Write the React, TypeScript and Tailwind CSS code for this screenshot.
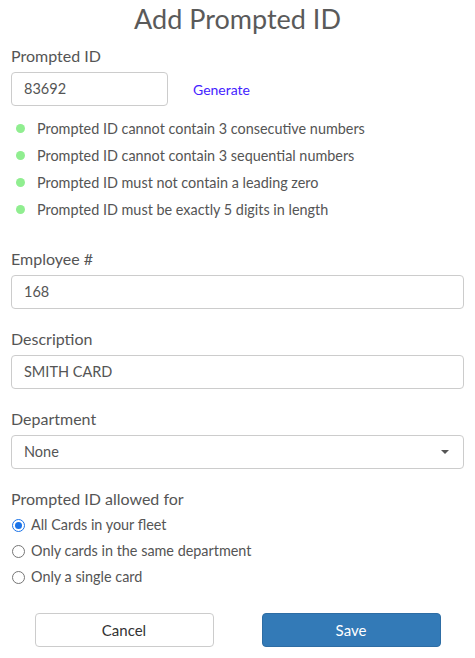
import React from "react";

const Label = ({ children, className = "" }: { children: React.ReactNode; className?: string }) => (
  <div className={`text-[16px] leading-[20px] text-[#555] ${className}`}>{children}</div>
);

const Field = ({ value, className = "" }: { value: string; className?: string }) => (
  <div className={`h-[34px] border border-[#ccc] rounded-[4px] bg-white flex items-center pl-[12px] text-[14.5px] text-[#555] ${className}`}>
    {value}
  </div>
);

const Bullet = ({ text }: { text: string }) => (
  <div className="flex items-center h-[27px]">
    <span className="w-[9px] h-[9px] rounded-full bg-[#90ee90] ml-[5px] mr-[12px] shrink-0" />
    <span className="text-[14.4px] text-[#555]">{text}</span>
  </div>
);

const Radio = ({ label, checked = false }: { label: string; checked?: boolean }) => (
  <div className="flex items-center h-[26px]">
    <span
      className={`w-[13px] h-[13px] rounded-full border ml-[12px] mr-[6px] flex items-center justify-center shrink-0 ${
        checked ? "border-[#1a73e8]" : "border-[#767676]"
      }`}
    >
      {checked && <span className="w-[7px] h-[7px] rounded-full bg-[#1a73e8]" />}
    </span>
    <span className="text-[14.4px] text-[#555]">{label}</span>
  </div>
);

export default function App() {
  return (
    <div className="w-[475px] h-[658px] bg-white px-[11px] font-['Lato',sans-serif]">
      <h1 className="pt-[3px] text-[27px] leading-[32px] text-center text-[#5a5a5a]">Add Prompted ID</h1>

      <Label className="mt-[11px]">Prompted ID</Label>
      <div className="flex items-center mt-[6px]">
        <Field value="83692" className="w-[157px]" />
        <span className="ml-[25px] text-[14px] text-[#4422ff]">Generate</span>
      </div>

      <div className="mt-[9px]">
        <Bullet text="Prompted ID cannot contain 3 consecutive numbers" />
        <Bullet text="Prompted ID cannot contain 3 sequential numbers" />
        <Bullet text="Prompted ID must not contain a leading zero" />
        <Bullet text="Prompted ID must be exactly 5 digits in length" />
      </div>

      <Label className="mt-[26px]">Employee #</Label>
      <Field value="168" className="mt-[6px]" />

      <Label className="mt-[20px]">Description</Label>
      <Field value="SMITH CARD" className="mt-[6px]" />

      <Label className="mt-[20px]">Department</Label>
      <div className="mt-[6px] h-[34px] border border-[#ccc] rounded-[4px] bg-white flex items-center justify-between pl-[12px] pr-[14px] text-[14.5px] text-[#555]">
        <span>None</span>
        <svg width="8" height="4" viewBox="0 0 8 4">
          <path d="M0 0 L8 0 L4 4 Z" fill="#555" />
        </svg>
      </div>

      <Label className="mt-[20px]">Prompted ID allowed for</Label>
      <div className="mt-[3px] -ml-[11px]">
        <Radio label="All Cards in your fleet" checked />
        <Radio label="Only cards in the same department" />
        <Radio label="Only a single card" />
      </div>

      <div className="flex justify-center gap-[48px] mt-[23px] -mx-[11px]">
        <button className="w-[179px] h-[34px] rounded-[4px] border border-[#ccc] bg-white text-[15px] text-[#333]">
          Cancel
        </button>
        <button className="w-[179px] h-[34px] rounded-[4px] border border-[#2e6da4] bg-[#337ab7] text-[15px] text-white">
          Save
        </button>
      </div>
    </div>
  );
}
